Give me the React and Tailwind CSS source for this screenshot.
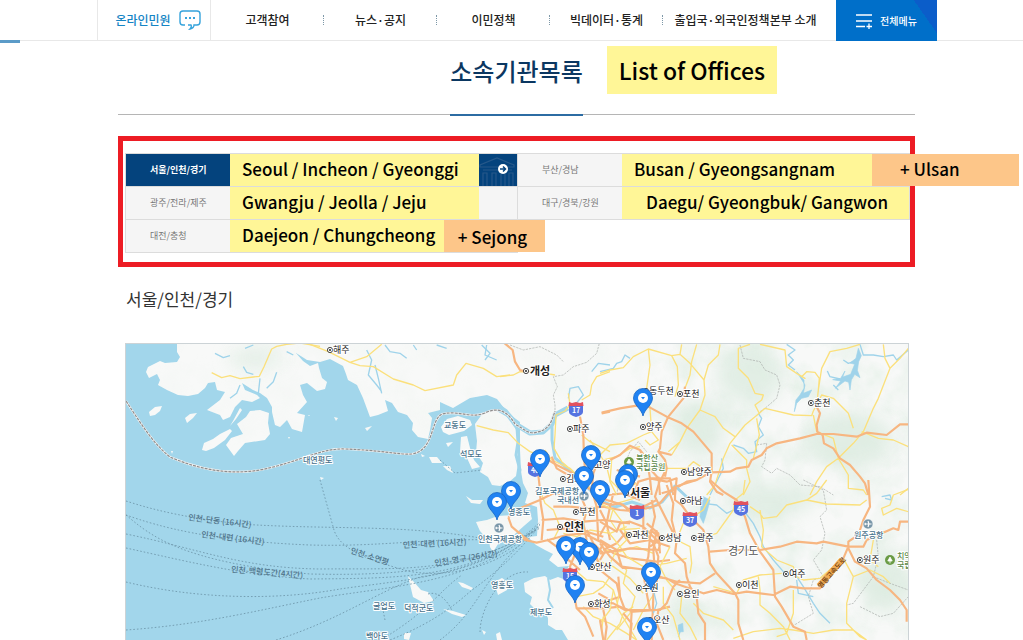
const MENU = ["고객참여", "뉴스·공지", "이민정책", "빅데이터·통계"];

// Map artwork is split in sheets. Each sheet uses a 3x grid from its own origin.
const SHEETS = [
  {
    x: 120, y: 335,
    minor: [
      "M275 113L305 128L330 122L360 131L400 126L418 124L432 95L455 42L470 34L500 28",
      "M500 28L540 24L600 34",
    ],
    streams: ["M285 55L310 68L330 62M375 40L400 30M370 95L380 112L400 118M440 160L460 140L470 112M360 150L350 175L330 190M520 60L500 50M415 175L420 130"],
  },
  {
    x: 310, y: 335,
    minor: [
      "M0 28L55 50L120 82L150 92L190 95L250 132L310 150L345 167L430 150L440 120L468 85L520 100L560 125L600 120",
      "M120 82L170 65L215 28",
    ],
    streams: ["M170 45L185 75L175 120L200 150L215 170M195 90L205 130L215 175M225 30L240 50L270 55L290 70M310 30L320 45M380 30L410 40M530 30L525 60L560 75"],
  },
  {
    x: 440, y: 335,
    minor: [
      "M110 272L160 285L205 293L235 325L270 350L300 362",
      "M345 120L300 112L240 110L220 120L180 125",
      "M385 175L390 210L375 228L348 240L345 300L342 340L365 380L400 410",
      "M510 110L470 125L455 150L450 180L425 195",
      "M425 300L450 320L480 335L510 350",
    ],
    major: [
      "M188 20L218 45L225 80L240 105L265 112",
      "M420 245L430 300L432 370L440 450",
      "M485 235L510 230",
      "M300 360L350 390L410 420L430 450",
    ],
    streams: ["M125 30L150 55L135 75M385 190L390 160L415 155L430 180L400 215M455 110L475 85L510 90"],
    borders: ["M345 235L345 210L340 180L352 155L340 125L370 120L400 95L440 82L470 55L478 25M210 30L250 45L300 35L350 60L370 80"],
  },
  {
    x: 470, y: 440,
    minor: [
      "M225 30L245 60L300 85L345 130L395 175L440 190L510 170",
      "M360 0L380 30L400 60L440 50L480 25L510 20",
      "M410 80L420 120L450 150L500 130",
      "M210 150L225 190L250 210L270 260L250 300",
      "M280 280L320 290L360 270L420 280L470 260",
      "M430 205L420 240L440 270L510 265",
    ],
    major: [
      "M205 105L210 150L212 190L220 240L215 300",
      "M115 232L150 205L210 180L250 160L300 165",
      "M115 232L125 260L160 290L175 300",
      "M250 200L300 200L350 205L400 200L450 210L510 215",
      "M245 50L260 85L320 120L370 155L410 180L460 195L490 225",
      "M385 60L370 100L365 150L380 200L385 300",
      "M335 175L350 210L340 250L350 300",
      "M430 160L420 200L410 250L420 300",
      "M215 240L280 235L340 245L400 240L480 250",
      "M440 90L475 100L510 110M415 165L460 160L510 180",
      "M230 270L290 265L350 275L400 290",
    ],
  },
  {
    x: 470, y: 530,
    minor: [
      "M330 20L350 60L380 90L430 110L480 145L520 190",
      "M315 120L350 150L400 155L430 180L445 230",
      "M400 60L450 65L500 50L550 70",
      "M420 80L470 120L460 160L495 200L480 250L440 300",
      "M320 200L370 190L400 170L420 140",
      "M340 230L370 260L420 280L470 310L500 330",
      "M400 260L395 300L400 330M560 180L520 240L490 300",
    ],
    major: [
      "M145 5L165 30L200 38L235 30L290 15L340 10L400 40L430 70L480 85L560 95L600 90",
      "M230 28L260 50L290 85L330 120",
      "M320 60L300 110L310 180L320 235L345 260L370 320",
      "M320 235L400 235L450 230L490 245L560 240L600 230",
      "M400 40L380 80L390 120L440 160L450 200L420 210L385 190",
      "M400 240L410 290L405 330",
      "M560 0L550 60L555 130L550 200L545 330",
      "M350 0L370 40L400 70M470 5L440 40L400 60",
      "M485 245L480 330M450 0L480 40L540 30L600 50",
    ],
  },
  {
    x: 600, y: 335,
    minor: [
      "M0 115L30 105L70 98L100 65L145 42L215 62L240 58L245 28",
      "M145 42L150 90L140 160L150 220L155 290",
      "M215 62L232 95L235 150L225 185",
      "M240 58L270 85L312 135L315 180L300 225L260 280L240 320L215 360",
      "M290 28L275 80L270 120L255 160",
      "M360 28L355 60L325 90L312 135",
      "M300 225L345 245L370 280L405 305",
      "M415 40L415 100L445 130L465 175L490 180L485 195L465 210L478 235L435 270L390 325L370 370L345 450L320 480",
      "M415 40L450 28M480 28L555 45L560 95L590 115L615 130L605 125L620 110L645 112L658 130L655 165L650 210",
      "M478 235L495 220L580 240L635 242L640 228L650 210L665 180L700 190L745 235L760 280",
      "M395 330L440 375L440 400L450 440L430 480",
      "M460 370L478 300L470 250",
      "M655 165L665 100L690 50L740 40L780 28",
      "M850 28L855 70L870 100L835 190L820 220L790 290L760 325L715 370L680 395L650 440L630 480",
      "M870 100L900 70L925 40",
      "M640 240L650 290L700 310L715 370L745 420L745 460L790 465L800 480",
      "M785 290L835 310L880 315L925 335",
      "M0 360L30 330L80 325L130 300L155 290L175 315L150 330L135 315",
      "M35 375L30 440L50 480M200 400L260 400L280 380L310 400",
      "M240 320L205 350M900 480L925 460",
    ],
    major: [
      "M5 233L60 220L110 212L145 215L200 245L245 265L280 290L335 355L335 410L330 440L350 470L370 480",
      "M255 155L250 190L205 245L185 290L180 340L175 350L195 375L200 400L195 425",
      "M335 412L390 410L410 400L445 395L455 375L485 360L500 340L530 325L600 310L650 297L700 297L770 305L800 293L860 300L900 268L925 268",
      "M650 215L660 235L650 270L652 290L668 300L672 325L700 340L720 370L750 390L780 425L795 445L805 480",
      "M0 400L30 375L60 360L90 332L120 345L140 370L150 430L155 480",
      "M200 400L185 430L150 430L115 440L100 480",
      "M335 410L290 435L260 440L220 465L185 475",
      "M175 350L215 360M120 345L140 390L175 430L210 430L220 480",
      "M175 425L180 480M150 430L200 440L230 430L225 480M70 480L105 440",
    ],
    streams: [
      "M0 110L40 100L50 85L65 80L75 60L90 70",
      "M560 28L585 45L565 60L580 75L565 90L585 105",
      "M780 28L790 60L820 60L850 65L880 60L890 75L925 45",
      "M475 235L485 250L475 275L490 300L465 320L470 350L445 355L430 340L400 330",
      "M365 370L370 400L345 450L330 480",
      "M682 108L690 125L720 132M700 150L715 165M730 75L745 85L760 80",
    ],
    lakes: [
      "M590 110L612 135L612 160L600 180L588 195L583 230L590 205L605 190L625 185L635 165L610 175L615 150Z",
      "M775 40L768 70L750 84L764 88L752 118L728 126L735 108L722 130L698 134L722 138L706 160L735 138L746 142L750 165L754 135L764 118L780 128L772 106L776 80L784 62Z",
    ],
    borders: [
      "M420 30L430 70L480 80L495 105L530 120L540 150L530 190L495 220L480 230",
      "M470 330L500 325L495 375L485 395L515 415L530 400L570 420L600 450L660 455L700 480",
      "M50 480L60 420L90 350L115 320L140 350",
    ],
  },
  {
    x: 600, y: 480,
    minor: [
      "M435 0L430 40L405 60L400 90L350 160L300 175",
      "M450 80L480 100L490 115L530 110L560 75L620 60L650 40L680 0",
      "M620 60L680 72L780 75L800 60",
      "M925 28L880 45L870 75L845 85L850 105L890 85L925 95",
      "M480 90L490 150L485 200L530 240L580 260L590 290L610 300L660 295L700 260L720 235",
      "M330 50L310 90L250 130L230 180L270 200L275 250L270 280",
      "M245 350L240 400L270 440L290 480",
      "M475 290L480 330L480 375L510 400L550 440L570 480",
      "M340 320L410 340L430 300L480 285L545 280",
      "M580 330L580 400L560 460L530 470",
      "M730 235L760 290L740 370L740 430L780 470L800 480",
      "M760 290L810 270L850 290L870 310",
      "M820 180L810 240L835 260",
      "M400 475L460 455L540 445L580 450L640 460L700 450L760 450L800 480",
      "M0 70L40 90L70 130L80 180L50 210L20 270",
      "M20 150L60 200L80 230L130 260L200 250L260 235",
      "M60 330L50 380L80 430L110 480M0 430L30 390L40 330",
      "M190 320L190 370L220 410L240 480M280 370L310 400L370 420L400 450",
      "M210 200L180 260L200 300L225 330M20 480L60 430L70 400L100 380",
    ],
    major: [
      "M0 65L30 75L60 70L90 90L140 85L175 75L205 40L225 20L290 0",
      "M330 0L370 35L410 60L435 110L450 160L480 215L520 270L525 350L545 380L580 440L615 455L620 480",
      "M225 20L225 60L245 75L270 110L310 150L325 200L330 250L350 280L405 340L415 360L415 430L430 480",
      "M805 0L810 80L790 120L775 165L745 185L745 205L765 245L800 265L830 300L870 330L900 360L920 390L920 425",
      "M745 200L730 235L700 270L660 325L610 325L570 320L520 345L440 335L400 342L350 330L310 340L225 310L200 295L160 290",
      "M330 215L390 210L480 210L540 200L590 185L650 190L670 185L745 200L790 200L800 180L880 145L895 150L900 125L925 125",
      "M200 15L220 70L215 120L230 180L225 220L255 250L260 290L270 320L290 350L295 400L315 430L315 480",
      "M155 60L165 110L150 170L145 230L130 280L140 340L150 390",
      "M180 0L165 50L185 90L220 160M170 60L130 80L130 150L160 190L175 230L170 290L170 320",
      "M0 125L50 155L60 130L90 125L130 140L170 180L180 195L175 210L90 205L0 220",
      "M0 180L50 210L65 260L140 270L180 290L230 305L300 310L345 280",
      "M0 365L40 370L75 390L110 390L180 390L200 370L220 320L240 300",
      "M70 400L95 430L90 480M55 290L60 350L75 390M175 390L170 430L190 480",
      "M150 150L185 175L150 200M140 130L175 160L180 220M0 190L30 230L70 265",
      "M0 90L20 130L0 165M15 215L0 240M0 420L10 480",
    ],
    streams: [
      "M225 15L260 50L310 70L350 75L380 100L400 90L430 90L460 130L480 170L490 200L520 240L550 275L590 290L610 320L640 370L660 400L690 430",
      "M235 470L245 440L235 445M590 300L595 340L640 350",
      "M845 50L870 45L875 60L855 55",
      "M160 330L170 370L160 400",
    ],
    lakes: ["M310 50L330 60L325 80L318 105L310 130L300 110L303 80Z", "M235 435L248 430L250 455L235 455Z"],
    borders: [
      "M610 0L670 30L680 90L660 110L675 160L665 210L640 240L670 290L640 300L625 350L640 400L575 440",
      "M830 180L835 230L820 290L790 330L760 370L740 375M820 290L870 310L925 330M780 380L840 410L880 400L925 350",
    ],
  },
];

const LAND = [
  // Haeju side and the mainland
  "M288 343L293 351L307 360L320 362L330 359L343 366L346 374L348 380L357 385L363 398L370 417L378 415L388 411L385 400L392 403L398 412L407 415L413 423L412 430L418 437L428 439L430 430L432 418L428 413L440 410L440 402L453 408L470 398L487 395L497 399L508 413L520 422L520 450L521 471L523 483L528 493L525 503L537 507L538 520L537 536L528 537L536 545L545 550L553 554L549 560L558 567L569 566L565 572L576 580L566 580L558 577L550 580L545 576L534 578L524 583L525 592L532 597L530 604L534 608L545 612L548 618L548 625L556 630L562 630L568 640L909 640L909 343Z",
  // Ongjin peninsula
  "M177 343L177 352L180 357L177 362L165 363L160 361L148 367L146 372L149 378L157 374L160 380L158 385L167 390L178 395L188 396L198 394L205 388L208 383L215 382L217 390L225 392L220 400L207 410L220 415L223 420L230 417L235 407L242 400L252 402L260 398L257 395L245 390L242 383L253 390L260 393L267 398L272 407L272 412L275 425L280 427L287 420L292 429L302 432L305 415L297 413L307 402L303 395L300 385L307 383L317 391L325 389L327 382L322 378L319 368L318 363L310 366L303 361L295 352L288 343Z",
  // islands south of Ongjin
  "M260 410L269 413L268 423L270 434L265 440L245 443L238 451L234 456L226 445L231 438L243 434L237 424L246 417L250 411Z",
  "M202 450L204 443L213 439L220 434L230 429L232 431L225 440L214 448L206 451Z",
  "M149 412L155 407L162 406L160 411L155 415L150 416Z",
  "M185 418L190 414L197 413L193 418L187 423Z",
  "M233 421L240 408L242 410L236 419L230 426Z",
  // Gyodong, Seongmo, Ganghwa
  "M441 427L447 419L458 416L470 420L472 425L464 431L449 435L443 432Z",
  "M461 437L467 436L470 448L474 460L480 467L472 469L467 458L460 452Z",
  "M475 424L483 413L495 410L507 417L517 431L517 446L518 463L516 476L509 482L500 486L492 485L488 477L480 472L483 463L476 453L477 441Z",
  // Yeongjong
  "M476 522L487 520L498 516L512 515L523 514L530 512L532 519L525 525L516 533L508 540L498 544L493 552L490 547L489 541L480 531Z",
  "M466 496L472 500L483 500L480 504L471 503Z",
  // small islands further out
  "M429 457L437 457L442 463L432 463ZM443 466L450 466L453 473L447 470ZM446 443L453 442L448 447ZM421 454L425 456L422 457Z",
  "M408 576L414 582L421 590L428 592L434 601L424 603L413 597Z",
  "M458 582L463 583L473 588L471 590L462 587ZM443 609L453 611L466 615L462 617L452 614Z",
  "M494 582L502 578L509 583L507 590L498 595Z",
  "M404 633L411 633L409 640L404 639ZM482 630L486 632L484 635ZM496 634L500 632L502 640L497 640Z",
  "M365 428L372 426L367 431ZM334 417L338 418L336 421ZM320 477L324 478L321 480ZM171 451L173 451L172 454ZM288 437L290 437L289 439ZM308 415L310 415L309 416Z",
];

const FERRIES = [
  "M126 501C160 512 190 518 240 524C330 530 400 524 480 538",
  "M126 515C160 527 210 541 310 545C380 547 430 538 490 540",
  "M126 534C200 549 240 568 320 569C400 568 460 575 536 530",
  "M126 515C150 535 180 562 310 574C400 576 470 570 540 528",
  "M126 548C190 562 240 575 310 579C400 578 470 580 540 526",
  "M126 582C200 600 280 600 340 589C400 580 480 578 540 524",
  "M126 630C200 625 260 610 320 598C390 586 480 584 540 525",
  "M276 640C340 620 380 590 420 577C480 568 510 550 540 522",
  "M320 480L334 530C340 550 370 560 404 570C430 577 480 575 520 545",
  "M384 638C430 610 440 590 462 575M390 640C440 620 460 600 472 590C500 570 520 550 536 530",
  "M428 594C440 590 450 605 452 611M440 640C480 610 480 580 530 535",
  "M385 620L382 605M480 632C480 610 500 570 528 572M440 460L455 473L482 470",
];

const SEA_BORDER = [
  "M126 401C145 430 155 445 170 457C200 470 230 475 260 470C300 462 320 448 345 449C380 450 400 455 412 454C435 450 430 420 442 414C460 410 470 419 485 413C500 405 510 415 515 424C525 430 530 435 537 432C550 430 552 420 555 411",
];

const CITIES = [
  { n: "해주", x: 330, y: 350 },
  { n: "개성", x: 526, y: 371, big: true },
  { n: "파주", x: 570, y: 429 },
  { n: "동두천", x: 646, y: 391 },
  { n: "포천", x: 680, y: 394 },
  { n: "양주", x: 643, y: 427 },
  { n: "춘천", x: 811, y: 403 },
  { n: "고양", x: 591, y: 465 },
  { n: "김포", x: 563, y: 479 },
  { n: "남양주", x: 684, y: 472 },
  { n: "서울", x: 626, y: 493, big: true },
  { n: "부천", x: 576, y: 512 },
  { n: "인천", x: 560, y: 527, big: true },
  { n: "과천", x: 629, y: 535 },
  { n: "성남", x: 662, y: 538 },
  { n: "하남", x: 683, y: 501 },
  { n: "광주", x: 694, y: 538 },
  { n: "이천", x: 739, y: 585 },
  { n: "여주", x: 786, y: 574 },
  { n: "원주", x: 860, y: 560 },
  { n: "수원", x: 639, y: 588 },
  { n: "용인", x: 680, y: 594 },
  { n: "화성", x: 591, y: 604 },
  { n: "안산", x: 592, y: 567 },
  { n: "오산", x: 650, y: 620 },
];

const PLACES = [
  { n: "대연평도", x: 303, y: 463 },
  { n: "교동도", x: 444, y: 428 },
  { n: "석모도", x: 460, y: 457 },
  { n: "영종도", x: 508, y: 515 },
  { n: "인천국제공항", x: 478, y: 542 },
  { n: "김포국제공항", x: 535, y: 494 },
  { n: "국내선", x: 557, y: 503 },
  { n: "영흥도", x: 491, y: 588 },
  { n: "제부도", x: 530, y: 615 },
  { n: "굴업도", x: 373, y: 609 },
  { n: "덕적군도", x: 404, y: 611 },
  { n: "백아도", x: 366, y: 639 },
  { n: "원주공항", x: 854, y: 538 },
];

const ROUTES = [
  { n: "인천-단동 (16시간)", x: 188, y: 520, r: 7 },
  { n: "인천-대련 (16시간)", x: 201, y: 537, r: 7 },
  { n: "인천-백령도간(4시간)", x: 231, y: 572, r: 5 },
  { n: "인천-대련 (16시간)", x: 403, y: 548, r: -3 },
  { n: "인천-소연평", x: 350, y: 553, r: 18 },
  { n: "인천-영구 (26시간)", x: 435, y: 566, r: -9 },
];

const PARKS = [
  { x: 629, y: 462, lines: ["북한산", "국립공원"] },
  { x: 890, y: 560, lines: ["치악산", "국립공원"] },
];

const SHIELDS = [
  { n: "17", x: 576, y: 409 },
  { n: "40", x: 535, y: 469 },
  { n: "1", x: 637, y: 512 },
  { n: "37", x: 690, y: 519 },
  { n: "45", x: 741, y: 508 },
  { n: "15", x: 570, y: 575 },
];

const AIRPORTS = [[499, 528], [584, 496], [868, 524]];

const PINS = [
  [643, 398], [591, 455], [540, 459], [628, 474], [584, 476], [625, 480], [600, 490],
  [511, 491], [497, 502], [580, 547], [566, 546], [589, 552], [651, 572], [575, 585], [647, 627],
];

function OfficeMap() {
  return (
    <svg
      className="block w-full h-[296px] font-['Noto_Sans_CJK_KR',sans-serif]"
      viewBox="126 344 783 296"
      preserveAspectRatio="xMinYMin slice"
      role="img"
      aria-label="서울/인천/경기 지도"
    >
      <defs>
        <filter id="relief" x="0" y="0" width="100%" height="100%">
          <feTurbulence type="fractalNoise" baseFrequency="0.03" numOctaves="4" seed="8" />
          <feColorMatrix values="0 0 0 0 0.8  0 0 0 0 0.88  0 0 0 0 0.82  2.4 0 0 0 -0.95" />
        </filter>
        <filter id="soft"><feGaussianBlur stdDeviation="9" /></filter>
        <linearGradient id="fade">
          <stop offset="0" stopColor="#fff" stopOpacity="0.1" />
          <stop offset="0.6" stopColor="#fff" stopOpacity="0.25" />
          <stop offset="0.72" stopColor="#fff" />
        </linearGradient>
        <mask id="east">
          <rect x="126" y="344" width="783" height="296" fill="url(#fade)" />
        </mask>
        <clipPath id="land"><path d={LAND.join("")} /></clipPath>
      </defs>

      <rect x="126" y="344" width="783" height="296" fill="#a2d6eb" />
      <path d={LAND.join("")} fill="#f8f9f8" />
      <g clipPath="url(#land)">
        <g mask="url(#east)">
          <rect x="126" y="344" width="783" height="296" filter="url(#relief)" />
        </g>
        <g fill="#dcebe0" filter="url(#soft)" opacity="0.8">
          <ellipse cx="750" cy="375" rx="34" ry="28" />
          <ellipse cx="850" cy="440" rx="44" ry="28" />
          <ellipse cx="770" cy="500" rx="44" ry="16" />
          <ellipse cx="885" cy="580" rx="24" ry="34" />
          <ellipse cx="700" cy="430" rx="24" ry="28" />
          <ellipse cx="690" cy="620" rx="22" ry="14" />
          <ellipse cx="256" cy="358" rx="28" ry="8" />
        </g>
      </g>

      {/* Han river and the channel east of Ganghwa */}
      <g fill="none" stroke="#a2d6eb" strokeLinejoin="round">
        <path d="M490 401L505 411L517 425L530 433L543 432L552 424L555 415L568 408" strokeWidth="5" />
        <path d="M552 424L552 440L555 458L568 469L583 483L600 500L615 507L632 502L650 508L662 502L675 486L690 500" strokeWidth="3" />
        <path d="M517 428L518 442L516 455L520 470L517 484" strokeWidth="3" />
        <path d="M548 578L550 590L548 600L553 608" strokeWidth="2" />
      </g>

      <g fill="none" stroke="#6f98ad" strokeWidth="0.9" strokeDasharray="1.6 2">
        {FERRIES.map((d) => <path key={d} d={d} />)}
      </g>

      {SHEETS.map((s) => (
        <g key={`${s.x}-${s.y}`} transform={`translate(${s.x} ${s.y}) scale(0.33333)`} fill="none" strokeLinejoin="round">
          {s.streams && <path d={s.streams.join("")} stroke="#9fd3ea" strokeWidth="4" />}
          {s.lakes && <path d={s.lakes.join("")} fill="#9fd3ea" stroke="#9fd3ea" strokeWidth="2" />}
          {s.borders && <path d={s.borders.join("")} stroke="#a9adab" strokeWidth="2" strokeDasharray="7 3" />}
          <path d={s.minor.join("")} stroke="#fbe07c" strokeWidth="4" />
          {s.major && <path d={s.major.join("")} stroke="#f7b681" strokeWidth="6.5" />}
        </g>
      ))}

      <g fill="none">
        <path d={SEA_BORDER.join("")} stroke="#f4f4f4" strokeWidth="2.2" />
        <path d={SEA_BORDER.join("")} stroke="#8d8d8d" strokeWidth="1.2" strokeDasharray="3 1" />
      </g>

      <g fontSize="8" fontWeight="500" fill="#4f7288">
        {ROUTES.map((r) => (
          <text key={r.n + r.x} x={r.x} y={r.y} transform={`rotate(${r.r} ${r.x} ${r.y})`}>{r.n}</text>
        ))}
      </g>

      {AIRPORTS.map(([x, y]) => (
        <g key={x} transform={`translate(${x} ${y})`}>
          <circle r="5" fill="#7896a8" stroke="#fff" strokeWidth="0.6" />
          <path d="M-3.5 0H3.5M0 -3L1 0L0 3M-2.8 -1.2V1.2" stroke="#fff" strokeWidth="1.2" fill="none" />
        </g>
      ))}

      <g fontSize="8" fontWeight="500" fill="#47718b" stroke="#fff" strokeWidth="2" strokeLinejoin="round" paintOrder="stroke">
        {PLACES.map((p) => <text key={p.n} x={p.x} y={p.y}>{p.n}</text>)}
      </g>

      {PARKS.map((p) => (
        <g key={p.x}>
          <circle cx={p.x} cy={p.y} r="5" fill="#6a9b45" />
          <path d={`M${p.x} ${p.y - 3}l2.2 4h-4.4zM${p.x} ${p.y}v3.4`} fill="#fff" stroke="#fff" strokeWidth="0.8" />
          <g fontSize="8" fontWeight="500" fill="#5b8a4a" stroke="#fff" strokeWidth="2" paintOrder="stroke">
            <text x={p.x + 7} y={p.y - 1}>{p.lines[0]}</text>
            <text x={p.x + 7} y={p.y + 8}>{p.lines[1]}</text>
          </g>
        </g>
      ))}

      {SHIELDS.map((s) => (
        <g key={s.n} transform={`translate(${s.x} ${s.y})`}>
          <path d="M-7 -3H7V3Q7 6 0 8Q-7 6 -7 3Z" fill="#5673e0" />
          <path d="M-7 -7L-4 -6L0 -7L4 -6L7 -7L7.5 -3H-7.5Z" fill="#e2525f" />
          <text y="4" fontSize="7" fontWeight="700" fill="#fff" textAnchor="middle">{s.n}</text>
        </g>
      ))}

      {CITIES.map((c) => (
        <g key={c.n}>
          <circle cx={c.x} cy={c.y} r="2.6" fill="#fff" stroke="#333" strokeWidth="0.9" />
          <circle cx={c.x} cy={c.y} r="1.1" fill="#333" />
          <text
            x={c.x + (c.big ? 4 : 3)}
            y={c.y + (c.big ? 4 : 3)}
            fontSize={c.big ? 11 : 9}
            fontWeight={c.big ? 700 : 400}
            fill="#222"
            stroke="#fff"
            strokeWidth="2"
            strokeLinejoin="round"
            paintOrder="stroke"
          >
            {c.n}
          </text>
        </g>
      ))}
      <text x="728" y="555" fontSize="11" fill="#555" stroke="#fff" strokeWidth="2" paintOrder="stroke">경기도</text>
      <path d="M819 586L842 560" stroke="#f0ad55" strokeWidth="6" />
      <text x="821" y="589" fontSize="7" fontWeight="500" fill="#6b3a10" transform="rotate(-49 821 589)">영동고속도로</text>

      {PINS.map(([x, y]) => (
        <g key={`${x}-${y}`} transform={`translate(${x} ${y})`}>
          <path d="M0 18C-1.5 11 -9.5 7 -9.5 0A9.5 9.5 0 0 1 9.5 0C9.5 7 1.5 11 0 18Z" fill="#1f82f2" stroke="#1766c4" strokeWidth="0.8" />
          <circle r="5" fill="#fff" />
          <path d="M-2 -1H2L0 1.5Z" fill="#1f82f2" />
        </g>
      ))}
    </svg>
  );
}

function BuildingTail() {
  return (
    <svg className="w-[38px] h-8 shrink-0" viewBox="0 0 38 32" fill="none" aria-hidden="true">
      <path d="M1 13V11L18 4L35 11V13ZM4 16H33M4 32V19H8V32M13 32V19H17V32M22 32V19H26V32M30 32V19H34V32" stroke="#26588a" strokeWidth="1.2" />
      <circle cx="24" cy="15" r="5" fill="#fff" />
      <path d="M21 15H26M24 12.5L26.5 15L24 17.5" stroke="#04437d" strokeWidth="1.5" />
    </svg>
  );
}

function Region({ name, en, active, pad = "pl-3", tail, extra }) {
  return (
    <a
      href="#map"
      className={`relative flex h-[33px] border-b border-r border-[#dcdcdc] ${active ? "bg-[#04437d] text-white font-bold" : "bg-[#f5f5f5] text-[#777]"}`}
    >
      <span className="w-[104px] shrink-0 pl-6 flex items-center text-[9px]">{name}</span>
      <span className={`flex-1 flex items-center pb-1 bg-[#fff697] text-black text-[17px] leading-none font-medium whitespace-nowrap ${pad}`}>{en}</span>
      {tail}
      {extra}
    </a>
  );
}

export default function App() {
  return (
    <div className="min-h-screen overflow-hidden bg-white font-['Noto_Sans_CJK_KR',sans-serif]">
      <header className="relative flex h-[41px] border-b border-[#e8e8e8] pl-[97px] pr-[86px] text-xs font-medium text-[#222]">
        <span className="absolute left-0 top-10 w-5 h-[3px] bg-[#5b9bc8]" />
        <a href="#civil" className="w-[114px] shrink-0 border-x border-[#e8e8e8] flex items-center justify-center gap-2 pl-2 text-[#1585c5]">
          온라인민원
          <svg className="w-[22px] h-5" viewBox="0 0 22 20" fill="none" stroke="#35a3dc" strokeWidth="1.4" aria-hidden="true">
            <path d="M6 15H4Q1 15 1 12V4Q1 1 4 1H18Q21 1 21 4V12Q21 15 18 15H15Q15 18 11 19Q13 17 12 15H9" />
            <path d="M6 8H8M10 8H12M14 8H16" strokeWidth="2" />
          </svg>
        </a>
        <nav className="flex-1 flex">
          {MENU.map((m) => (
            <a key={m} href="#menu" className="w-[113px] shrink-0 flex items-center justify-center relative whitespace-nowrap">
              {m}
              <span className="absolute right-0 top-[15px] h-[10px] border-l border-dotted border-[#7d98a8]" />
            </a>
          ))}
          <a href="#about" className="flex-1 flex items-center justify-center whitespace-nowrap pr-2">출입국·외국인정책본부 소개</a>
        </nav>
        <button type="button" className="w-[101px] h-[41px] shrink-0 flex items-center justify-center gap-2 text-white text-[10px] bg-[linear-gradient(55deg,#006fc9_82%,#0b5dc9_82%)]">
          <svg className="w-4 h-4" viewBox="0 0 16 16" stroke="#fff" strokeWidth="1.3" aria-hidden="true">
            <path d="M0 2H16M0 8H16M0 13.5H9M13 10.5V16M10.5 13.5H16" />
          </svg>
          전체메뉴
        </button>
      </header>

      <main className="pl-[118px] pr-[108px]">
        <div className="flex justify-center border-b border-[#b5b5b5] h-[74px]">
          <div className="relative h-[75px] pt-3 border-b-2 border-[#2c6ca3]">
            <h1 className="text-2xl leading-9 font-medium text-[#0b3761] whitespace-nowrap">소속기관목록</h1>
            <mark className="absolute left-full top-[5px] ml-6 h-12 px-3 flex items-center bg-[#fff697] text-black text-[23px] font-medium whitespace-nowrap">
              List of Offices
            </mark>
          </div>
        </div>

        <section className="mt-[21px] border-[5px] border-[#ed1c24] pt-3 pb-[9px] pl-0.5">
          <div className="grid grid-cols-2 border-l border-t border-[#dcdcdc]">
            <Region name="서울/인천/경기" en="Seoul / Incheon / Gyeonggi" active tail={<BuildingTail />} />
            <Region
              name="부산/경남"
              en="Busan / Gyeongsangnam"
              extra={
                <mark className="absolute -right-[110px] top-0 w-[147px] h-8 pl-7 pb-1 flex items-center bg-[#fdc689] text-black text-[17px] leading-none font-medium">
                  + Ulsan
                </mark>
              }
            />
            <Region name="광주/전라/제주" en="Gwangju / Jeolla / Jeju" tail={<span className="w-[38px] shrink-0" />} />
            <Region name="대구/경북/강원" en="Daegu/ Gyeongbuk/ Gangwon" pad="pl-6" />
            <Region
              name="대전/충청"
              en="Daejeon / Chungcheong"
              extra={
                <mark className="absolute -right-7 top-0 w-[101px] h-8 flex items-center justify-center bg-[#fdc689] text-black text-[17px] leading-none font-medium pr-1">
                  + Sejong
                </mark>
              }
            />
          </div>
        </section>

        <h2 className="mt-[18px] ml-2 text-[17px] leading-7 text-[#333]">서울/인천/경기</h2>

        <div id="map" className="mt-[30px] ml-[7px] mr-1.5 border border-b-0 border-[#ccd3d6]">
          <OfficeMap />
        </div>
      </main>
    </div>
  );
}
